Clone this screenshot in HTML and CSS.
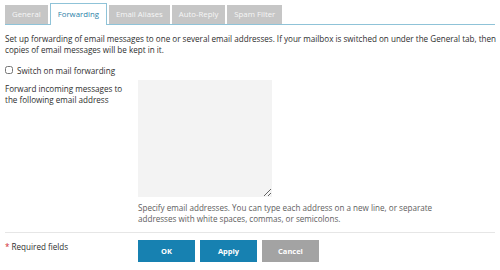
FILE: index.html
```html
<!DOCTYPE html>
<html lang="en">
<head>
  <meta charset="UTF-8">
  <title>Mail Forwarding</title>
  <link rel="stylesheet" href="styles.css">
</head>
<body>
  <div id="page">
    <div class="tabs">
      <div class="tab">General</div>
      <div class="tab active">Forwarding</div>
      <div class="tab">Email Aliases</div>
      <div class="tab">Auto-Reply</div>
      <div class="tab">Spam Filter</div>
    </div>
    <p class="intro">Set up forwarding of email messages to one or several email addresses. If your mailbox is switched on under the General tab, then copies of email messages will be kept in it.</p>
    <label class="check"><input type="checkbox"> Switch on mail forwarding</label>
    <div class="row">
      <div class="row-label">Forward incoming messages to the following email address</div>
      <div class="row-field">
        <textarea class="addresses"></textarea>
        <div class="hint">Specify email addresses. You can type each address on a new line, or separate addresses with white spaces, commas, or semicolons.</div>
      </div>
    </div>
    <div class="footer">
      <div class="required"><span class="star">*</span> Required fields</div>
      <div class="buttons">
        <button class="btn primary">OK</button>
        <button class="btn primary">Apply</button>
        <button class="btn cancel">Cancel</button>
      </div>
    </div>
  </div>
</body>
</html>
```

FILE: styles.css
```css
html, body {
  margin: 0;
  padding: 0;
  background: white;
  font-family: 'Open Sans', sans-serif;
  font-size: 8.1px;
  color: #2e2e2e;
}
#page {
  padding: 4px 5px 0 5px;
}
.tabs {
  display: flex;
  align-items: flex-end;
  gap: 2px;
  border-bottom: 1px solid #8fc3d8;
  height: 20px;
}
.tab {
  height: 19px;
  line-height: 19px;
  padding: 0 7px;
  background: #c6c6c6;
  color: #f6f6f6;
  font-size: 7.8px;
}
.tab.active {
  background: white;
  color: #2b7fa8;
  border: 1px solid #8fc3d8;
  border-bottom: none;
  margin-bottom: -1px;
  height: 21px;
  line-height: 20px;
}
.intro {
  margin: 8px -4px 0 0;
  line-height: 11px;
}
.check {
  display: flex;
  align-items: center;
  gap: 4px;
  margin-top: 9px;
  height: 12px;
}
.check input {
  margin: 0;
  width: 8px;
  height: 8px;
}
.row {
  display: flex;
  margin-top: 4px;
}
.row-label {
  width: 125px;
  padding-top: 3px;
  line-height: 11px;
  margin-right: 8px;
}
.addresses {
  display: block;
  width: 134px;
  height: 117px;
  box-sizing: border-box;
  border: none;
  background: #f3f3f3;
  margin: 0;
}
.hint {
  color: #5e5e5e;
  line-height: 11px;
  margin-top: 5px;
  width: 300px;
}
.footer {
  display: flex;
  border-top: 1px solid #e6e6e6;
  margin-top: 8px;
  padding-top: 7px;
}
.required {
  width: 133px;
  padding-top: 1px;
}
.star {
  color: #d0292f;
}
.buttons {
  display: flex;
  gap: 5px;
}
.btn {
  width: 57px;
  height: 22px;
  border: none;
  color: white;
  font-family: 'Open Sans', sans-serif;
  font-weight: bold;
  font-size: 7.5px;
  padding: 0;
}
.btn.primary {
  background: #1781b1;
}
.btn.cancel {
  background: #a3a3a3;
}
```
